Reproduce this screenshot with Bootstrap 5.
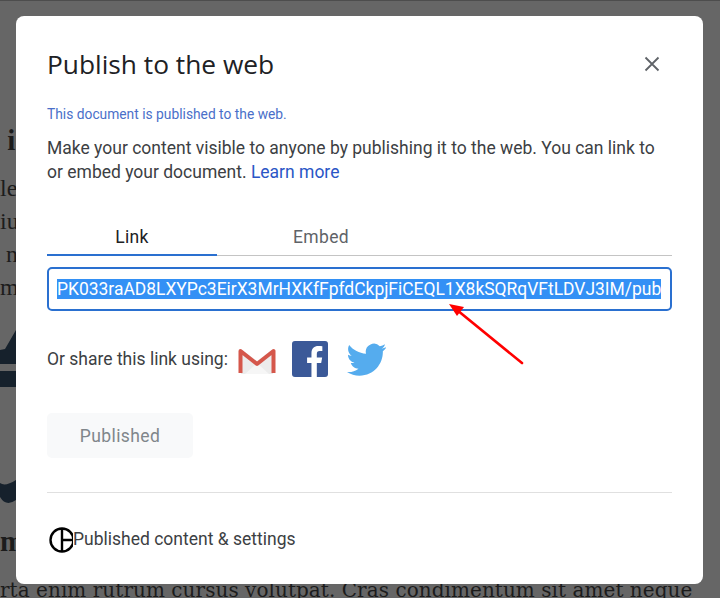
<!DOCTYPE html>
<html lang="en">
<head>
<meta charset="utf-8">
<title>Publish to the web</title>
<link href="https://cdn.jsdelivr.net/npm/bootstrap@5.3.0/dist/css/bootstrap.min.css" rel="stylesheet">
<style>
html,body{height:100%;margin:0}
body{background:#666;font-family:Roboto,sans-serif;overflow:hidden}
.stage{position:relative;width:720px;height:598px;overflow:hidden;border-top:1px solid #4d4d4d}
.docbg{font-family:"Liberation Serif",serif;color:#1c1c1c;width:720px}
.docline{font-size:24px;line-height:33px;white-space:nowrap;height:33px}
.docbold{font-weight:700;font-size:29px;line-height:36px;height:36px;white-space:nowrap}
.topgap{height:121px}
.gapa{height:14px}
.gapb{height:26px}
.gapc{height:91px}
.gapd{height:17px}
.art{height:57px;display:block}
.artb{height:28px;display:block}
.lastline{font-family:"DejaVu Serif",serif;font-size:20px;letter-spacing:.05px;line-height:24px;white-space:nowrap;color:#1c1c1c;margin-top:19px}
.pubdlg{position:absolute;left:16px;top:15px;width:687px;height:568px;background:#fff;border-radius:8px;padding:31px 31px 0 31px}
.pubtitle{font-family:"Open Sans",sans-serif;font-size:26.3px;line-height:34px;color:#202124;margin:0;font-weight:400}
.closex{width:16px;height:16px;margin:9px 12px 0 0;padding:0;border:0;background:none;line-height:0}
.statusline{font-size:13.8px;line-height:20px;color:#4a6fc9;margin-top:23px}
.leadtext{font-size:17.5px;line-height:24px;color:#3c4043;margin-top:12px;margin-bottom:0}
.leadtext a{color:#2a56c6;text-decoration:none}
.tabrow{margin-top:35px;border-bottom:1px solid #c4c4c4;height:37px}
.tabitem{height:37px;text-align:center;font-size:17.5px;line-height:36px;color:#5f6368;letter-spacing:.3px}
.tablink{width:170px;color:#202124;border-bottom:2px solid #2a70d0}
.tabembed{width:208px}
.urlbox{margin-top:11px;height:44px;border:2px solid #2a70d0;border-radius:5px;padding:6px 8px;overflow:hidden;font-size:17.44px;line-height:28px;white-space:nowrap}
.urlsel{background:#3390f5;color:#fff}
.redarrow{position:absolute;left:440px;top:294px;width:90px;height:76px}
.sharerow{margin-top:27px;height:42px;font-size:17.5px;color:#3c4043}
.gmailicon{margin:4px 0 0 10px}
.fbicon{margin-left:16px}
.twicon{margin:2px 0 0 19px}
.pubbtn{margin-top:33px;width:146px;height:45px;background:#f8f9fa;border-radius:5px;color:#80868b;font-size:17.5px;letter-spacing:.4px;line-height:46px;text-align:center}
.sepline{margin-top:34px;border-top:1px solid #e0e0e0}
.setrow{margin-top:32px;font-size:17.5px;color:#3c4043;height:28px}
</style>
</head>
<body>
<div class="stage">
  <div class="docbg">
    <div class="topgap"></div>
    <div class="docbold">&nbsp;i</div>
    <div class="gapa"></div>
    <div class="docline">le</div>
    <div class="docline">iu</div>
    <div class="docline">&nbsp;n</div>
    <div class="docline">m</div>
    <div class="gapb"></div>
    <svg class="art" width="20" height="57" viewBox="0 0 20 57"><path d="M0 20 5 19 16 0V34H0z" fill="#16212c"/><path d="M0 41H16V57H0z" fill="#16212c"/></svg>
    <div class="gapc"></div>
    <svg class="artb" width="20" height="28" viewBox="0 0 20 28"><path d="M0 5Q5 9 16 2V22Q6 29 0 19z" fill="#16212c"/></svg>
    <div class="gapd"></div>
    <div class="docbold">m</div>
    <div class="lastline">rta enim rutrum cursus volutpat. Cras condimentum sit amet neque</div>
  </div>
  <div class="pubdlg">
    <div class="d-flex justify-content-between align-items-start">
      <h1 class="pubtitle">Publish to the web</h1>
      <button class="closex" type="button" aria-label="Close"><svg width="16" height="16" viewBox="0 0 16 16"><path d="M1.5 1.5 14.500 14.500M14.500 1.500 1.500 14.500" stroke="#5f6368" stroke-width="1.800" fill="none"/></svg></button>
    </div>
    <div class="statusline">This document is published to the web.</div>
    <p class="leadtext">Make your content visible to anyone by publishing it to the web. You can link to or embed your document. <a href="#">Learn more</a></p>
    <div class="tabrow d-flex">
      <div class="tabitem tablink">Link</div>
      <div class="tabitem tabembed">Embed</div>
    </div>
    <div class="urlbox"><span class="urlsel">PK033raAD8LXYPc3EirX3MrHXKfFpfdCkpjFiCEQL1X8kSQRqVFtLDVJ3IM/pub</span></div>
    <div class="sharerow d-flex align-items-center">
      <span>Or share this link using:</span>
      <svg class="gmailicon" width="38" height="28" viewBox="0 0 38 28"><path d="M3 2 19 14 35 2V27H3z" fill="#ececec"/><path d="M7 27 19 16 31 27z" fill="#f6f6f6"/><path d="M2.500 26V4L19 17 35.500 4V26" stroke="#d5574b" stroke-width="4" stroke-linejoin="round" fill="none"/></svg>
      <svg class="fbicon" width="36" height="36" viewBox="0 0 37 37"><rect width="37" height="37" rx="3" fill="#3b5998"/><path d="M25.500 37V22.500H30L31 17H25.500V13.500C25.500 11.500 26.200 10.300 28.500 10.300H31.200V5.400C30 5.200 28.700 5.100 27 5.100 23 5.100 20 7.600 20 12.500V17H15.500V22.500H20V37z" fill="#fff"/></svg>
      <svg class="twicon" width="40" height="34" viewBox="0 0 24 20"><path d="M23.500 2.400c-.9.400-1.800.600-2.800.800 1-.6 1.800-1.500 2.100-2.700-.9.600-2 1-3.100 1.200A4.900 4.900 0 0 0 11.400 6.200C7.300 6 3.700 4 1.300 1c-1.300 2.200-.600 5 1.500 6.500-.8 0-1.500-.2-2.200-.6 0 2.300 1.600 4.300 3.900 4.800-.7.200-1.500.2-2.200.1.600 2 2.400 3.400 4.600 3.400A9.900 9.900 0 0 1 0 17.200C2.200 18.600 4.800 19.400 7.500 19.400c9.100 0 14.300-7.700 14-14.600 1-.7 1.800-1.500 2-2.400z" fill="#55acee"/></svg>
    </div>
    <div class="pubbtn">Published</div>
    <div class="sepline"></div>
    <div class="setrow d-flex align-items-center">
      <svg width="26" height="28" viewBox="0 0 26 28" class="flex-shrink-0"><circle cx="15" cy="15" r="11.500" fill="none" stroke="#000" stroke-width="2.400"/><path d="M15 3V27M15 15H26" stroke="#000" stroke-width="2.400" fill="none"/></svg>
      <span>Published content &amp; settings</span>
    </div>
  </div>
  <svg class="redarrow" viewBox="0 0 90 76"><path d="M82 68 17 15" stroke="#f00" stroke-width="2.600" stroke-linecap="round" fill="none"/><path d="M9 9 24 12 17 21z" fill="#f00"/></svg>
</div>
<script src="https://cdn.jsdelivr.net/npm/bootstrap@5.3.0/dist/js/bootstrap.bundle.min.js"></script>
</body>
</html>
